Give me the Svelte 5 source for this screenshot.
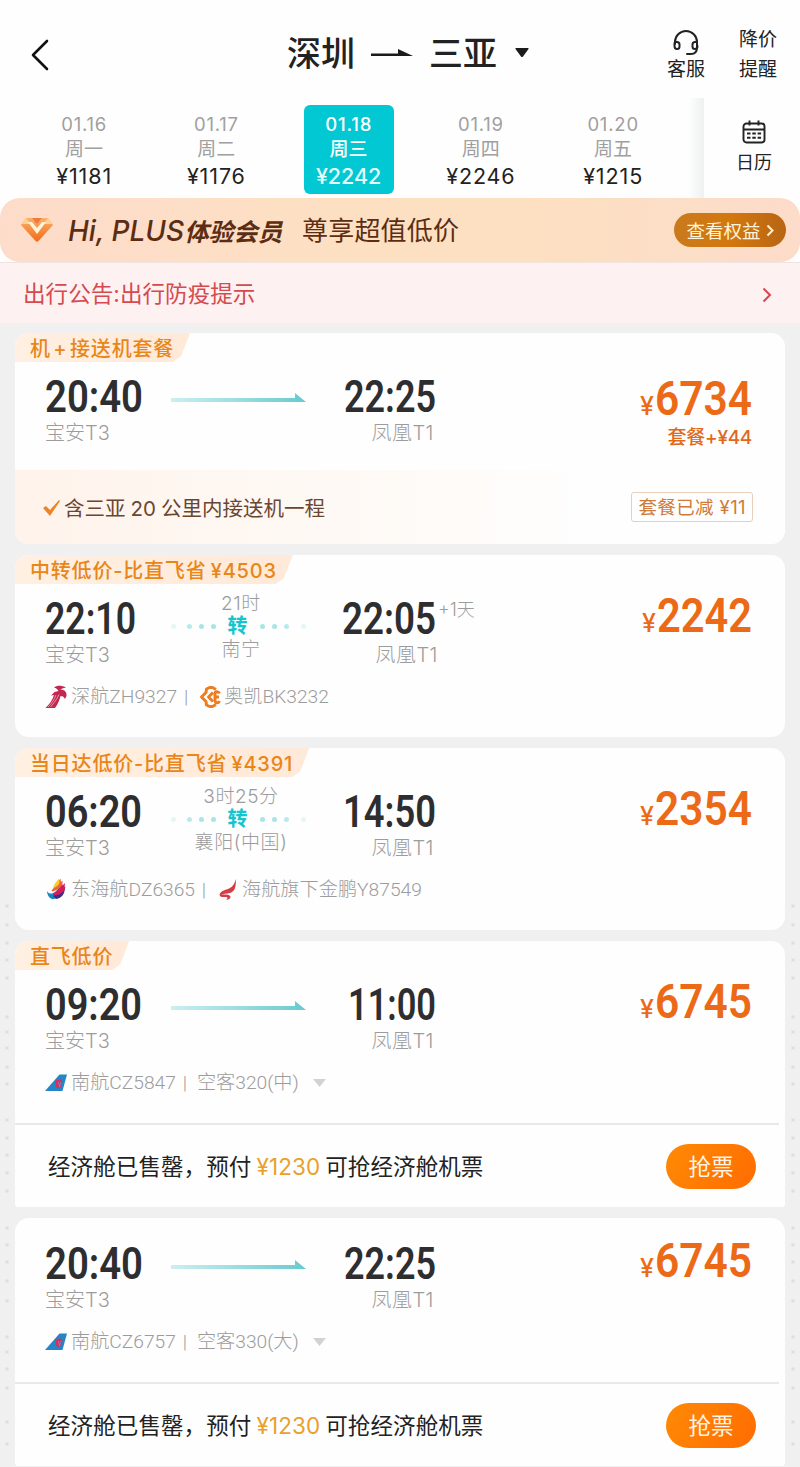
<script lang="ts">
  type Flight = {
    tag?: string;
    depart: string;
    departWidth: number;
    arrive: string;
    arriveWidth: number;
    nextDay?: boolean;
    transfer?: { duration: string; city: string };
    price: string;
    priceWidth: number;
    bundle?: boolean;
    airlines?: { logo: string; name: string }[];
    plane?: string;
    soldOut?: boolean;
  };

  const days = [
    { date: '01.16', week: '周一', price: '¥1181' },
    { date: '01.17', week: '周二', price: '¥1176' },
    { date: '01.18', week: '周三', price: '¥2242' },
    { date: '01.19', week: '周四', price: '¥2246' },
    { date: '01.20', week: '周五', price: '¥1215' }
  ];

  const flights: Flight[] = [
    {
      tag: '机\u200a+\u200a接送机套餐',
      depart: '20:40',
      departWidth: 98,
      arrive: '22:25',
      arriveWidth: 92,
      price: '6734',
      priceWidth: 97,
      bundle: true
    },
    {
      tag: '中转低价-比直飞省\u2009¥4503',
      depart: '22:10',
      departWidth: 91,
      arrive: '22:05',
      arriveWidth: 94,
      nextDay: true,
      transfer: { duration: '21时', city: '南宁' },
      price: '2242',
      priceWidth: 95,
      airlines: [
        { logo: 'shenzhen', name: '深航ZH9327' },
        { logo: 'okay', name: '奥凯BK3232' }
      ]
    },
    {
      tag: '当日达低价-比直飞省\u2009¥4391',
      depart: '06:20',
      departWidth: 97,
      arrive: '14:50',
      arriveWidth: 93,
      transfer: { duration: '3时25分', city: '襄阳(中国)' },
      price: '2354',
      priceWidth: 97,
      airlines: [
        { logo: 'donghai', name: '东海航DZ6365' },
        { logo: 'hainan', name: '海航旗下金鹏Y87549' }
      ]
    },
    {
      tag: '直飞低价',
      depart: '09:20',
      departWidth: 97,
      arrive: '11:00',
      arriveWidth: 88,
      price: '6745',
      priceWidth: 97,
      airlines: [{ logo: 'southern', name: '南航CZ5847' }],
      plane: '空客320(中)',
      soldOut: true
    },
    {
      depart: '20:40',
      departWidth: 98,
      arrive: '22:25',
      arriveWidth: 92,
      price: '6745',
      priceWidth: 97,
      airlines: [{ logo: 'southern', name: '南航CZ6757' }],
      plane: '空客330(大)',
      soldOut: true
    }
  ];

  let selected = $state(2);

  // faint marks running down both page edges
  const marks = [906, 925, 943, 960, 978, 1017, 1032, 1048, 1067, 1084, 1120, 1138, 1155, 1173, 1191, 1228, 1245, 1262, 1281, 1301, 1337, 1352, 1369, 1388, 1422, 1444];
</script>

{#snippet digits(text: string, width: number, size: number)}
  <svg class="digits" width={width} height={size} viewBox="0 0 {width} {size}">
    <text x="0" y={size * 0.86} font-size={size} textLength={width} lengthAdjust="spacingAndGlyphs">{text}</text>
  </svg>
{/snippet}

{#snippet airlineLogo(name: string)}
  <svg class="logo" width="24" height="24" viewBox="0 0 24 24" aria-hidden="true">
    {#if name === 'shenzhen'}
      <path d="M9 2.500c3-2.500 8-2 12 0-2 .3-4 1-6 2 4 0 7 2 6.500 6.500L20 14c-1-2-2-3-4.500-3-1 4-2.500 8-5.500 12H.5c4-4 7-8 8.500-13l-3 .5L9.500 7l4-1c-1-2-2.500-3-4.500-3.500z" fill="#c4264f" />
      <path d="M14 9.500C12 14 9 18 5.500 22M11 10c-2 5-4.500 8.500-8 12" stroke="#fff" stroke-width=".5" fill="none" />
    {:else if name === 'okay'}
      <g fill="none" stroke="#ee7d22" stroke-width="3" stroke-linejoin="round">
        <path d="M11.500 2.500 8.500 4 8 7.500 3.500 12 8 16.500 8.500 20l3 1.500" />
        <path d="M11 2.500h3.500l3.500 2M11 21.500h3.500l3.500-2M15 7.500 10.500 12l4.500 4.500" />
        <path d="M21.500 8.500c-1-2.500-4.500-2.500-4.500 0v7c0 3 3.500 3 4.500.5M21 12h-4" />
      </g>
    {:else if name === 'donghai'}
      <path d="M2 13c3 5 9 2 12-4 2 3 0 11-5 12C5 22 2 17 2 13z" fill="#1688c9" />
      <path d="M8 18c5-3 8-8 11-9l1-.5c0 7.500-3 11.500-9 12.500z" fill="#3d2c83" />
      <path d="M8 15.500c5-2 7.500-7 9-13l.5 5 2.500-2.500-.5 4 1-.5c-1 6-6 9-12.500 9z" fill="#d91a5c" />
      <path d="m6.500 12.500 5-6 4-6 .5 4 1.500-2c0 7-4 9-10 11z" fill="#ee6730" />
      <path d="m8 9.500 2-4 4-5 .5 4.500C13 8 10 10 8 9.500z" fill="#f7cd34" />
    {:else if name === 'hainan'}
      <path d="M20 1c0 8-1 12.500-6 14-4 1-6.500.5-9.500 2 3.500-.5 7.500-.8 9.500.8 1.500 1.700-.5 4.200-4 4.200 2-1.500 2-3-.5-3-3 .3-5.500 0-6-2 1-5.500 8-4.500 12-8 2.500-2.200 3.500-5 4.500-8z" fill="#d43d47" />
    {:else}
      <path d="M0 20 14.500 3.500H22L17.500 20z" fill="#2386c8" />
      <path d="M10.500 9.500q3.500-2 7 .5l-1 5-3.500 2.500-2-2z" fill="#d4325d" />
      <path d="m13.500 11 1 5M16 11l-1.500 5" stroke="#6d8fd3" stroke-width=".8" />
    {/if}
  </svg>
{/snippet}

<div class="page">
  <header class="header">
    <button class="back" aria-label="返回">
      <svg width="22" height="34" viewBox="0 0 22 34">
        <path d="M17 3 3 17l14 14" fill="none" stroke="#111" stroke-width="2.600" stroke-linecap="round" stroke-linejoin="round" />
      </svg>
    </button>
    <h1 class="title">
      <span>深圳</span>
      <svg width="42" height="12" viewBox="0 0 42 12"><path d="M0 5.500h27V1L42 8H0z" fill="#1b1b1b" /></svg>
      <span>三亚</span>
      <svg class="title-caret" width="14" height="9" viewBox="0 0 14 9"><path d="M1 0h12q1 0 .5 1L8 8.500q-1 1-2 0L.5 1Q0 0 1 0z" fill="#1b1b1b" /></svg>
    </h1>
    <button class="service">
      <svg width="28" height="26" viewBox="0 0 28 26" fill="none" stroke="#222" stroke-width="2" stroke-linecap="round">
        <path d="M3 14v-2a11 11 0 0 1 22 0v5c0 5-2 7-6 7h-4" />
        <path d="M3 12h2q2.500 0 2.500 2.500v2Q7.500 19 5 19T2.500 16v-3M25 12h-2q-2.500 0-2.500 2.500v2Q20.500 19 23 19t2.500-3" />
      </svg>
      <span>客服</span>
    </button>
    <button class="alert">降价<br />提醒</button>
  </header>

  <nav class="dates">
    <div class="days">
      {#each days as day, i}
        <button class="day" class:active={i === selected} onclick={() => (selected = i)}>
          <span class="day-date">{day.date}</span>
          <span class="day-week">{day.week}</span>
          <span class="day-price">{day.price}</span>
        </button>
      {/each}
    </div>
    <button class="calendar">
      <svg width="24" height="24" viewBox="0 0 24 24" fill="none" stroke="#222" stroke-width="1.900">
        <rect x="1.500" y="3.500" width="21" height="19" rx="3" />
        <path d="M2 9.500h20M7.500.5v5M16.500.5v5" />
        <path d="M5 13.500h3.500M10.300 13.500h3.500M15.600 13.500h3.500M5 17.800h3.500M10.300 17.800h3.500M15.600 17.800h3.500" />
      </svg>
      <span>日历</span>
    </button>
  </nav>

  <section class="plus-wrap">
    <div class="plus">
      <svg class="gem" width="34" height="26" viewBox="0 0 34 26">
        <defs>
          <linearGradient id="gem" x2="0" y2="1"><stop stop-color="#fbb06c" /><stop offset="1" stop-color="#f06b17" /></linearGradient>
        </defs>
        <path d="M6 1h22l5 7-14.500 16q-1.500 1.500-3 0L1 8z" fill="url(#gem)" />
        <path d="m6 1 5 6H2zM28 1l-5 6h9z" fill="#ffd08f" />
        <path d="M8 5h4l5 6 5-6h4l-9 12z" fill="#fff3d8" />
        <path d="m12 1 5 6 5-6z" fill="#ef7a3d" />
      </svg>
      <span class="plus-name"><span class="plus-hi">Hi, PLUS</span>体验会员</span>
      <span class="plus-text">尊享超值低价</span>
      <button class="plus-btn">
        <span>查看权益</span>
        <svg width="8" height="13" viewBox="0 0 8 13"><path d="m1.500 1.500 5 5-5 5" fill="none" stroke="#fff3d8" stroke-width="2" /></svg>
      </button>
    </div>
  </section>

  <section class="notice">
    <span>出行公告:出行防疫提示</span>
    <svg width="10" height="16" viewBox="0 0 10 16"><path d="m1.500 1.500 6.500 6.500-6.500 6.500" fill="none" stroke="#dc4650" stroke-width="2" /></svg>
  </section>

  <main class="list">
    {#each flights as flight}
      <article class="card" class:tagged={flight.tag} class:flat={flight.soldOut}>
        {#if flight.tag}
          <div class="tag">{flight.tag}</div>
        {/if}

        <div class="flight">
          <div class="depart">
            {@render digits(flight.depart, flight.departWidth, 44)}
            <span class="airport">宝安T3</span>
          </div>

          {#if flight.transfer}
            <div class="transfer">
              <span class="transfer-info">{flight.transfer.duration}</span>
              <div class="transfer-line">
                <i class="far"></i><i class="mid"></i><i></i><i></i>
                <b>转</b>
                <i></i><i></i><i class="mid"></i><i class="far"></i>
              </div>
              <span class="transfer-info">{flight.transfer.city}</span>
            </div>
          {:else}
            <svg class="arrow" width="136" height="10" viewBox="0 0 136 10">
              <defs>
                <linearGradient id="arrow"><stop stop-color="#cdeef0" /><stop offset="1" stop-color="#66cbd0" /></linearGradient>
              </defs>
              <path d="M0 5h124V0l11 9H0z" fill="url(#arrow)" />
            </svg>
          {/if}

          <div class="arrive" class:shifted={flight.nextDay}>
            {@render digits(flight.arrive, flight.arriveWidth, 44)}
            {#if flight.nextDay}<span class="next-day">+1天</span>{/if}
            <span class="airport">凤凰T1</span>
          </div>

          <div class="price" class:lower={flight.bundle}>
            <div class="amount">
              <span class="yen">¥</span>
              {@render digits(flight.price, flight.priceWidth, 48)}
            </div>
            {#if flight.bundle}<span class="extra">套餐+¥44</span>{/if}
          </div>
        </div>

        {#if flight.airlines}
          <div class="airlines">
            {#each flight.airlines as airline, i}
              {#if i > 0}<span class="sep">|</span>{/if}
              {@render airlineLogo(airline.logo)}
              <span class="airline-name">{airline.name}</span>
            {/each}
            {#if flight.plane}
              <span class="sep">|</span>
              <span class="plane">{flight.plane}</span>
              <svg class="more" width="13" height="8" viewBox="0 0 13 8"><path d="M0 0h13L6.500 8z" fill="#d2d2d2" /></svg>
            {/if}
          </div>
        {/if}

        {#if flight.bundle}
          <div class="benefit">
            <svg width="17" height="17" viewBox="0 0 17 17"><path d="m0 9 3-2 4 4L16 1l1 1L7 17z" fill="#ee8522" /></svg>
            <span class="benefit-text">含三亚<em>20</em>公里内接送机一程</span>
            <span class="coupon">套餐已减 ¥11</span>
          </div>
        {/if}

        {#if flight.soldOut}
          <div class="divider"></div>
          <div class="grab">
            <span class="grab-text">经济舱已售罄，预付<em>¥1230</em>可抢经济舱机票</span>
            <button class="grab-btn">抢票</button>
          </div>
        {/if}
      </article>
    {/each}
  </main>

  <svg class="marks" width="800" height="1467" viewBox="0 0 800 1467" aria-hidden="true">
    {#each marks as y}
      <path d="M5.500 {y}h3M791.500 {y}h3" stroke="#dedede" stroke-width="3" />
    {/each}
  </svg>
</div>

<style>
  :global(body) {
    margin: 0;
    background: #f0f0f0;
  }

  .page {
    position: relative;
    width: 800px;
    height: 1467px;
    overflow: hidden;
    background: #f0f0f0;
    color: #222;
    font-family: Inter, 'Noto Sans CJK SC', sans-serif;
  }

  button {
    padding: 0;
    border: 0;
    background: none;
    color: inherit;
    font: inherit;
    cursor: pointer;
  }

  svg {
    display: block;
    flex-shrink: 0;
  }

  em {
    font-style: normal;
  }

  .header {
    display: flex;
    align-items: flex-start;
    height: 98px;
    background: #fefefe;
  }

  .back {
    width: 255px;
    padding: 38px 0 0 30px;
  }

  .title {
    display: flex;
    align-items: center;
    width: 412px;
    height: 50px;
    margin: 29px 0 0;
    padding-left: 32px;
    box-sizing: border-box;
    font-size: 34px;
    font-weight: 500;
    line-height: 50px;
  }

  .title svg {
    margin: 0 16px;
  }

  .title .title-caret {
    margin: 0 0 3px 18px;
  }

  .service {
    display: flex;
    flex-direction: column;
    align-items: center;
    gap: 1px;
    width: 38px;
    padding-top: 30px;
    font-size: 19px;
    line-height: 26px;
    white-space: nowrap;
  }

  .alert {
    margin: 25px 0 0 34px;
    font-size: 19px;
    line-height: 29.500px;
    white-space: nowrap;
  }

  .dates {
    display: flex;
    height: 100px;
    background: #fefefe;
  }

  .days {
    display: flex;
    width: 704px;
    padding-left: 18px;
    box-sizing: border-box;
    background: linear-gradient(to left, #eef0f1, #fefefe 16px);
  }

  .day {
    display: flex;
    flex-direction: column;
    align-items: center;
    width: 90px;
    height: 89px;
    margin: 7px 21.125px 0;
    padding-top: 6px;
    box-sizing: border-box;
    border-radius: 6px;
    color: #a0a0a0;
  }

  .day-date {
    font-size: 18.500px;
    letter-spacing: 0.800px;
    line-height: 27px;
  }

  .day-week {
    font-size: 19px;
    line-height: 24px;
  }

  .day-price {
    color: #222;
    font-size: 21.500px;
    letter-spacing: 0.900px;
    line-height: 28px;
  }

  .day.active {
    background: #02c8d3;
    color: #fff;
    font-weight: 500;
  }

  .active .day-price {
    color: #e4fdfd;
    letter-spacing: 0;
  }

  .calendar {
    display: flex;
    flex-direction: column;
    align-items: center;
    width: 96px;
    padding: 22px 0 0 4px;
    gap: 6px;
    font-size: 18px;
    line-height: 26px;
  }

  .plus-wrap {
    background: #fefefe;
  }

  .plus {
    display: flex;
    align-items: center;
    height: 64px;
    padding: 0 14px 0 20px;
    border-radius: 20px;
    box-sizing: border-box;
    background: linear-gradient(90deg, #fddccb, #fde0c2 45%, #fddfc1 65%, #fcdcca);
    color: #5c2d12;
  }

  .plus-name {
    margin-left: 14px;
    padding-top: 2px;
    width: 234px;
    font-size: 24.500px;
    font-style: italic;
    font-weight: 600;
    line-height: 34px;
    white-space: nowrap;
  }

  .plus-hi {
    font-size: 28px;
    font-weight: 500;
  }

  .plus-text {
    margin-top: 2px;
    font-size: 26px;
    letter-spacing: 0.200px;
    line-height: 34px;
  }

  .plus-btn {
    display: flex;
    align-items: center;
    justify-content: center;
    gap: 5px;
    width: 112px;
    height: 34px;
    margin-left: auto;
    border-radius: 17px;
    background: linear-gradient(90deg, #c97a1d, #d3780f 50%, #b86513);
    color: #fff3d8;
    font-size: 18.500px;
  }

  .plus-btn span {
    padding-bottom: 1px;
  }

  .notice {
    display: flex;
    align-items: center;
    justify-content: space-between;
    height: 61px;
    padding: 0 28px 0 23px;
    border-top: 1px solid #f1e4e0;
    box-sizing: border-box;
    background: #fef1f1;
    color: #d44a4e;
    font-size: 22.600px;
  }

  .notice span {
    padding-bottom: 2px;
  }

  .notice svg {
    margin-top: 3px;
  }

  .list {
    display: flex;
    flex-direction: column;
    gap: 11px;
    padding: 10px 15px 0;
  }

  .card {
    flex-shrink: 0;
    border-radius: 14px;
    overflow: hidden;
    background: #fefefe;
  }

  .card.flat {
    border-radius: 14px 14px 3px 3px;
  }

  .tag {
    width: fit-content;
    height: 29px;
    padding: 0 16px 0 15px;
    background: linear-gradient(90deg, #fff0e2, #ffe9d8);
    clip-path: polygon(0 0, 100% 0, calc(100% - 9px) 80%, calc(100% - 17px) 100%, 0 100%);
    color: #e8861a;
    font-size: 20px;
    font-weight: 500;
    letter-spacing: 0.800px;
    line-height: 32px;
  }

  .flight {
    display: grid;
    grid-template-columns: 126px 136px 129px 1fr;
    align-items: start;
    height: 110px;
    padding: 23px 33px 0 30px;
    box-sizing: border-box;
  }

  .tagged .flight {
    padding-top: 12px;
    height: 99px;
  }

  .digits {
    overflow: visible;
    fill: #2e2e30;
    font-family: Roboto, sans-serif;
    font-weight: 600;
  }

  .depart,
  .arrive,
  .price {
    display: flex;
    flex-direction: column;
  }

  .arrive {
    position: relative;
    align-items: flex-end;
  }

  .airport {
    margin-top: 2px;
    color: #9c9c9c;
    font-size: 20px;
    font-weight: 300;
    line-height: 26px;
  }

  .arrive .airport {
    margin-right: 2px;
    letter-spacing: 0.500px;
  }

  .arrive.shifted .airport {
    margin-right: -2px;
  }

  .next-day {
    position: absolute;
    top: 2px;
    left: 131px;
    color: #9c9c9c;
    font-size: 18px;
    font-weight: 300;
    line-height: 24px;
    white-space: nowrap;
  }

  .arrow {
    margin-top: 19px;
  }

  .transfer {
    display: flex;
    flex-direction: column;
    align-items: center;
    margin-top: -4px;
    padding-left: 4px;
  }

  .transfer-info {
    color: #9c9c9c;
    font-size: 19px;
    font-weight: 300;
    letter-spacing: 0.600px;
    line-height: 24px;
    white-space: nowrap;
  }

  .transfer-line {
    display: flex;
    align-items: center;
    justify-content: center;
    gap: 7px;
    width: 136px;
    height: 22px;
    margin: -1px 0 1px -6px;
  }

  .transfer-line i {
    width: 5px;
    height: 5px;
    border-radius: 50%;
    background: #a9e4e6;
  }

  .transfer-line .mid {
    opacity: 0.8;
  }

  .transfer-line .far {
    opacity: 0.3;
  }

  .far:first-child {
    margin-right: 4px;
  }

  .far:last-child {
    margin-left: 5px;
  }

  .transfer-line b {
    margin: 0 5px;
    color: #14c5cf;
    font-size: 20px;
    font-weight: 600;
    line-height: 22px;
  }

  .price {
    align-items: flex-end;
    margin-top: -5px;
  }

  .price.lower {
    margin-top: 0;
  }

  .amount {
    display: flex;
    align-items: flex-end;
    gap: 1px;
  }

  .price .digits,
  .yen {
    fill: #ec6a17;
    color: #ec6a17;
  }

  .yen {
    margin-bottom: -1px;
    font-size: 25px;
    font-weight: 500;
    line-height: 34px;
  }

  .extra {
    margin-top: 3px;
    color: #e0691c;
    font-size: 19px;
    font-weight: 500;
    letter-spacing: -0.300px;
    line-height: 26px;
  }

  .airlines {
    display: flex;
    align-items: center;
    height: 54px;
    padding: 0 0 26px 30px;
    box-sizing: border-box;
    color: #9c9c9c;
    font-family: Roboto, 'Noto Sans CJK SC', sans-serif;
    font-size: 19.200px;
    font-weight: 300;
    line-height: 26px;
    white-space: nowrap;
  }

  .airline-name {
    margin-left: 2px;
  }

  .sep {
    width: 18px;
    margin-right: 3px;
    text-align: center;
  }

  .more {
    margin-left: 14px;
  }

  .benefit {
    display: flex;
    align-items: center;
    height: 74px;
    margin-top: 9px;
    padding: 0 32px 0 28px;
    background: linear-gradient(90deg, #fff3eb, #fefbf8 55%, #fefefe 75%);
    color: #6a4632;
    font-size: 20.500px;
  }

  .benefit-text {
    margin-left: 4px;
    padding-bottom: 1px;
  }

  .benefit em {
    margin: 0 5px;
  }

  .coupon {
    height: 30px;
    margin-left: auto;
    padding: 0 6px;
    border: 1px solid #e9cfb9;
    border-radius: 3px;
    box-sizing: border-box;
    color: #cf7a3a;
    font-size: 18.500px;
    letter-spacing: 0.400px;
    line-height: 28px;
  }

  .divider {
    height: 2px;
    margin-right: 6px;
    background: #e9e9e9;
  }

  .grab {
    display: flex;
    align-items: center;
    justify-content: space-between;
    height: 82px;
    padding: 0 29px 0 33px;
    font-size: 22.500px;
    letter-spacing: 0.100px;
  }

  .grab-text {
    padding-bottom: 2px;
  }

  .grab em {
    margin: 0 5px;
    color: #e8a12b;
  }

  .grab-btn {
    width: 90px;
    height: 45px;
    padding-bottom: 2px;
    border-radius: 23px;
    background: linear-gradient(120deg, #ff8a05, #ff6c02);
    color: #fff4e6;
  }

  .marks {
    position: absolute;
    inset: 0;
    pointer-events: none;
  }
</style>
